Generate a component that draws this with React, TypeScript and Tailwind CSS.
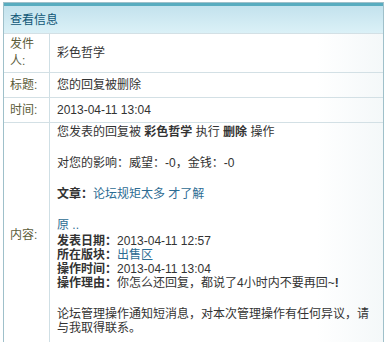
const label = "text-[#5c5c3a]";
const link = "text-[#2d6c93]";

function Row({
  name,
  children,
  className = "",
}: {
  name: string;
  children: React.ReactNode;
  className?: string;
}) {
  return (
    <div className={`flex border-t border-[#d3e0e5] ${className}`}>
      <div className={`flex w-[46px] shrink-0 items-center border-r border-[#cfdfe5] px-[6px] leading-[17px] ${label}`}>
        {name}
      </div>
      <div className="flex flex-1 items-center bg-gradient-to-r from-white from-80% to-[#f4f8f9] pl-[7px] pr-[8px] text-[#333]">
        {children}
      </div>
    </div>
  );
}

export default function App() {
  return (
    <div className="h-[342px] w-[392px] overflow-hidden bg-white pl-[3px] pt-[2px] font-['Liberation_Sans','Noto_Sans_CJK_SC',sans-serif] text-[12px]">
      <div className="w-[381px] border border-[#9fc0ca]">
        <div className="h-[3px] bg-[#58acbf]" />
        <div className="flex h-[27px] items-center bg-gradient-to-b from-[#c3e2ed] to-[#dbf1f7] pl-[6px] text-[#0f5676]">
          查看信息
        </div>
        <Row name="发件人:" className="h-[39px] border-[#a9cbd6]">
          彩色哲学
        </Row>
        <Row name="标题:" className="h-[25px]">
          您的回复被删除
        </Row>
        <Row name="时间:" className="h-[25px]">
          2013-04-11 13:04
        </Row>
        <Row name="内容:" className="h-[226px]">
          <div className="self-start pt-[2px]">
            <div className="leading-[15.5px]">
              <div>
                您发表的回复被 <b>彩色哲学</b> 执行 <b>删除</b> 操作
              </div>
              <div className="h-[15.5px]" />
              <div>对您的影响：威望：-0，金钱：-0</div>
              <div className="h-[15.5px]" />
              <div>
                <b>文章：</b>
                <span className={link}>论坛规矩太多 才了解</span>
              </div>
              <div className="h-[15.5px]" />
              <div className={link}>原 ..</div>
            </div>
            <div className="leading-[14px]">
              <div>
                <b>发表日期：</b>2013-04-11 12:57
              </div>
              <div>
                <b>所在版块：</b>
                <span className={link}>出售区</span>
              </div>
              <div>
                <b>操作时间：</b>2013-04-11 13:04
              </div>
              <div>
                <b>操作理由：</b>你怎么还回复，都说了4小时内不要再回~<b>!</b>
              </div>
              <div className="mt-[17px]">
                论坛管理操作通知短消息，对本次管理操作有任何异议，请与我取得联系。
              </div>
            </div>
          </div>
        </Row>
      </div>
    </div>
  );
}
